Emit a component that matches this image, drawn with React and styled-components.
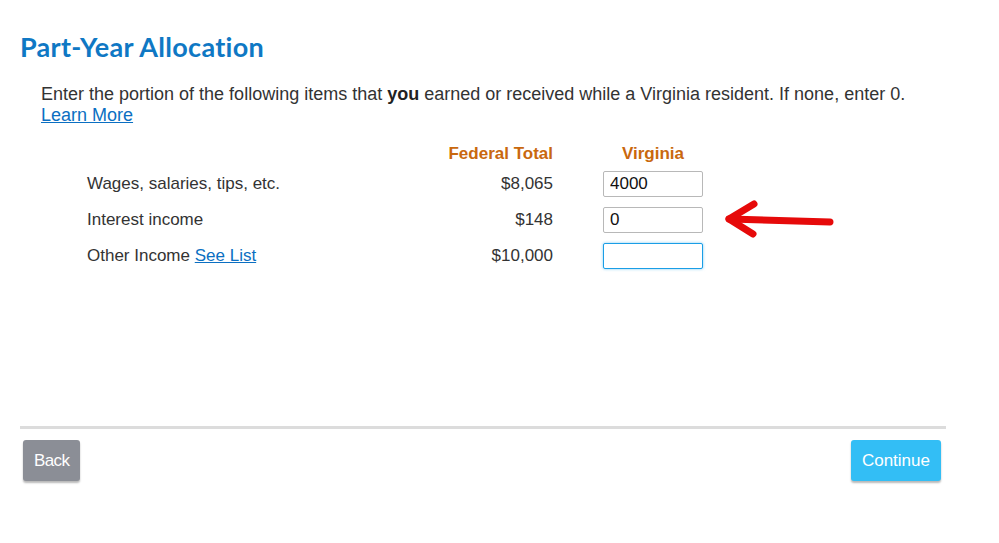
import { Fragment } from "react";
import styled, { createGlobalStyle } from "styled-components";

const GlobalStyle = createGlobalStyle`
  body {
    margin: 0;
    background: #fff;
    font-family: "Liberation Sans", Arial, sans-serif;
    color: #333;
  }
`;

const Page = styled.div`
  width: 999px;
  height: 543px;
  padding: 31px 53px 0 20px;
  box-sizing: border-box;
`;

const Title = styled.h1`
  margin: 0;
  font-family: Lato, "Open Sans", sans-serif;
  font-weight: 700;
  font-size: 27px;
  line-height: 32px;
  letter-spacing: 0.3px;
  color: #0f78c4;
`;

const Intro = styled.p`
  margin: 21px 0 0 21px;
  font-size: 18px;
  line-height: 21px;
  color: #333;

  b {
    color: #222;
  }
`;

const Link = styled.a`
  color: #0b6fc2;
  text-decoration: underline;
  cursor: pointer;
`;

const Table = styled.div`
  display: grid;
  grid-template-columns: 300px 166px 150px 140px;
  grid-template-rows: 24px;
  grid-auto-rows: 36px;
  align-items: center;
  margin: 16px 0 0 67px;
`;

const HeadCell = styled.div`
  font-weight: 700;
  font-size: 17px;
  color: #c9680e;
  justify-self: end;
  width: ${(p) => (p.$center ? "100px" : "auto")};
  text-align: ${(p) => (p.$center ? "center" : "right")};
`;

const Label = styled.div`
  font-size: 17px;
  color: #333;
`;

const Amount = styled.div`
  font-size: 17px;
  color: #333;
  text-align: right;
`;

const Input = styled.input`
  justify-self: end;
  width: 100px;
  height: 26px;
  box-sizing: border-box;
  border: 1px solid ${(p) => (p.$focus ? "#1a9ee6" : "#b8b8b8")};
  border-radius: 2px;
  box-shadow: ${(p) => (p.$focus ? "0 0 3px rgba(26,158,230,0.55)" : "none")};
  padding: 0 6px;
  font-family: "Liberation Sans", Arial, sans-serif;
  font-size: 17px;
  color: #111;
  outline: none;
`;

const ArrowCell = styled.div`
  padding-left: 20px;
  display: flex;
  align-items: center;
`;

const Divider = styled.hr`
  margin: 152px 0 0 0;
  border: none;
  height: 3px;
  background: #dcdcdc;
`;

const Actions = styled.div`
  display: flex;
  justify-content: space-between;
  padding: 11px 5px 0 3px;
`;

const Button = styled.button`
  height: 41px;
  padding: 0 ${(p) => p.$pad || 11}px;
  border: none;
  border-radius: 3px;
  background: ${(p) => p.$bg};
  color: #fff;
  font-family: "Liberation Sans", Arial, sans-serif;
  font-size: 17px;
  letter-spacing: ${(p) => p.$ls || "0"};
  box-shadow: 0 2px 2px rgba(0, 0, 0, 0.28);
  cursor: pointer;
`;

const RedArrow = () => (
  <svg width="116" height="40" viewBox="0 0 116 40">
    <g stroke="#e60a0a" strokeWidth="7" strokeLinecap="round" strokeLinejoin="round" fill="none">
      <path d="M6 19 L107 22" />
      <path d="M31 4 L6 19 L30 34" />
    </g>
  </svg>
);

const rows = [
  { label: "Wages, salaries, tips, etc.", amount: "$8,065", value: "4000" },
  { label: "Interest income", amount: "$148", value: "0", arrow: true },
  { label: "Other Income", link: "See List", amount: "$10,000", value: "", focus: true },
];

export default function App() {
  return (
    <Page>
      <GlobalStyle />
      <Title>Part-Year Allocation</Title>
      <Intro>
        Enter the portion of the following items that <b>you</b> earned or received while a
        Virginia resident. If none, enter 0.
        <br />
        <Link>Learn More</Link>
      </Intro>
      <Table>
        <div />
        <HeadCell>Federal Total</HeadCell>
        <HeadCell $center>Virginia</HeadCell>
        <div />
        {rows.map((r) => (
          <Fragment key={r.label}>
            <Label>
              {r.label}
              {r.link && (
                <>
                  {" "}
                  <Link>{r.link}</Link>
                </>
              )}
            </Label>
            <Amount>{r.amount}</Amount>
            <Input defaultValue={r.value} $focus={r.focus} />
            <ArrowCell>{r.arrow && <RedArrow />}</ArrowCell>
          </Fragment>
        ))}
      </Table>
      <Divider />
      <Actions>
        <Button $bg="#8b8e96" $pad={11} $ls="-0.6px">
          Back
        </Button>
        <Button $bg="#33bef5" $pad={11}>
          Continue
        </Button>
      </Actions>
    </Page>
  );
}
